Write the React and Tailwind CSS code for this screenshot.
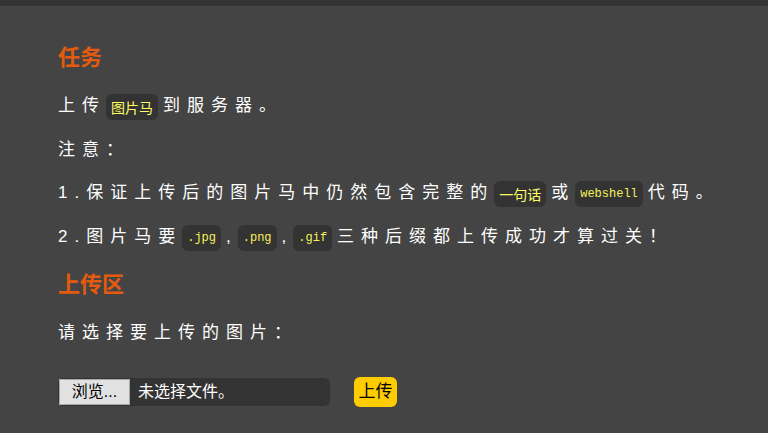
import React from "react";

const body = {
    fontFamily: '"Liberation Sans", "Noto Sans CJK SC", sans-serif',
};

function Code({ children, mono = false }) {
    return (
        <code
            className={
                mono
                    ? "inline-block align-middle rounded-md bg-[#333333] px-[5px] py-[4px] text-[12px] leading-[18px] tracking-normal text-[#f5f05a] font-['Liberation_Mono',monospace] mr-[5px]"
                    : "inline-block align-middle rounded-md bg-[#333333] px-[5px] py-[4px] text-[14px] leading-[18px] tracking-normal text-[#ffff66] font-['Noto_Sans_CJK_SC',sans-serif] mr-[5px]"
            }
        >
            {children}
        </code>
    );
}

export default function App() {
    return (
        <div className="min-h-screen bg-[#444444] text-white" style={body}>

            {/* top bar */}
            <div className="h-[6px] bg-[#333333]" />

            <main className="px-[58px] pt-[38px] pb-10">

                <h2 className="text-[22px] font-bold leading-[28px] text-[#e35b0e]">
                    任务
                </h2>

                <p className="mt-[20px] text-[17px] leading-[28px] tracking-[7px] whitespace-nowrap">
                    上传<Code>图片马</Code>到服务器。
                </p>

                <p className="mt-[16px] text-[17px] leading-[28px] tracking-[7px] whitespace-nowrap">
                    注意：
                </p>

                <p className="mt-[15px] text-[17px] leading-[28px] tracking-[7px] whitespace-nowrap">
                    1.保证上传后的图片马中仍然包含完整的<Code>一句话</Code>或<Code mono>webshell</Code>代码。
                </p>

                <p className="mt-[16px] text-[17px] leading-[28px] tracking-[7px] whitespace-nowrap">
                    2.图片马要<Code mono>.jpg</Code>,<Code mono>.png</Code>,<Code mono>.gif</Code>三种后缀都上传成功才算过关！
                </p>

                <h2 className="mt-[20px] text-[22px] font-bold leading-[28px] text-[#e35b0e]">
                    上传区
                </h2>

                <p className="mt-[20px] text-[17px] leading-[28px] tracking-[7px] whitespace-nowrap">
                    请选择要上传的图片：
                </p>

                {/* UPLOAD FORM */}
                <form className="mt-[30px] flex items-center gap-6" onSubmit={(e) => e.preventDefault()}>

                    <label className="flex h-[28px] w-[272px] items-center rounded-md bg-[#333333] pl-px">
                        <span className="flex h-[26px] w-[71px] items-center justify-center border border-[#a9a9a9] bg-[#e1e1e1] text-[16px] text-black">
                            浏览...
                        </span>
                        <span className="ml-2 text-[16px] text-white">
                            未选择文件。
                        </span>
                    </label>

                    <button
                        type="submit"
                        className="flex h-[30px] w-[43px] items-center justify-center rounded-md bg-[#ffcc00] text-[17px] text-black"
                    >
                        上传
                    </button>

                </form>

            </main>

        </div>
    );
}
